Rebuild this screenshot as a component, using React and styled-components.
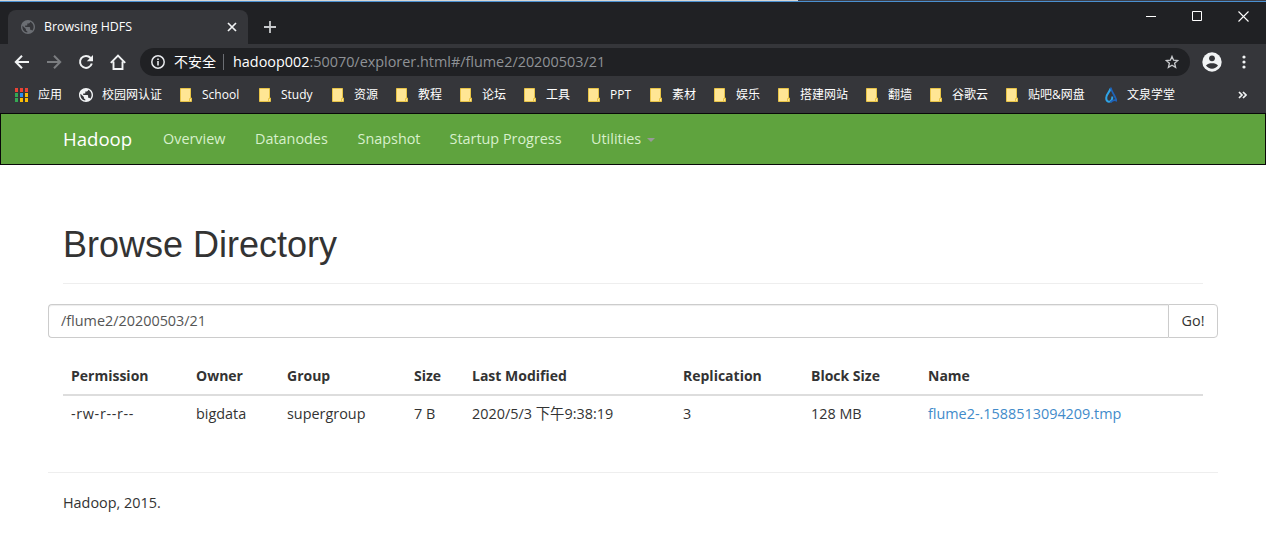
import styled, { createGlobalStyle } from "styled-components";

const ui = `"Open Sans", "Noto Sans CJK SC", sans-serif`;

const folders = [
  { label: "School", w: 79 },
  { label: "Study", w: 73 },
  { label: "资源", w: 64 },
  { label: "教程", w: 64 },
  { label: "论坛", w: 64 },
  { label: "工具", w: 64 },
  { label: "PPT", w: 62 },
  { label: "素材", w: 64 },
  { label: "娱乐", w: 64 },
  { label: "搭建网站", w: 88 },
  { label: "翻墙", w: 64 },
  { label: "谷歌云", w: 76 },
  { label: "贴吧&网盘", w: 99 },
];

const columns = [
  { label: "Permission", value: "-rw-r--r--", w: 125, spacing: 0.65 },
  { label: "Owner", value: "bigdata", w: 91 },
  { label: "Group", value: "supergroup", w: 127 },
  { label: "Size", value: "7 B", w: 58 },
  { label: "Last Modified", value: "2020/5/3 下午9:38:19", w: 211 },
  { label: "Replication", value: "3", w: 128 },
  { label: "Block Size", value: "128 MB", w: 117 },
  { label: "Name", value: "flume2-.1588513094209.tmp", w: 283, link: true },
];

const links = [
  { label: "Overview", w: 92 },
  { label: "Datanodes", w: 102.5 },
  { label: "Snapshot", w: 92 },
  { label: "Startup Progress", w: 141.5 },
];

function Globe({ color }) {
  return (
    <svg width="14" height="14" viewBox="2 2 20 20">
      <path
        d="M12 2C6.48 2 2 6.48 2 12s4.48 10 10 10 10-4.48 10-10S17.52 2 12 2zm-1 17.93c-3.950-.49-7-3.850-7-7.930 0-.62.08-1.210.21-1.790L9 15v1c0 1.100.9 2 2 2v1.930zm6.900-2.540c-.26-.81-1-1.390-1.900-1.390h-1v-3c0-.55-.45-1-1-1H8v-2h2c.55 0 1-.45 1-1V7h2c1.100 0 2-.9 2-2v-.41c2.930 1.190 5 4.060 5 7.410 0 2.080-.8 3.970-2.100 5.390z"
        fill={color}
      />
    </svg>
  );
}

function FolderIcon() {
  return (
    <svg width="12" height="14" viewBox="0 0 12 14">
      <path d="M.5.5h10v9.5h1v3.5H.5z" fill="#ffe694" stroke="#e8c447" />
      <path d="M9.5 13.5v-3h2" fill="none" stroke="#e8c447" />
    </svg>
  );
}

function AppsIcon() {
  const colors = ["#ea4335", "#ea4335", "#ea4335", "#34a853", "#2a8cf4", "#fbbc05", "#34a853", "#fbbc05", "#fbbc05"];
  return (
    <svg width="13" height="14" viewBox="0 0 13 14">
      {colors.map((c, i) => (
        <rect key={i} x={(i % 3) * 5} y={Math.floor(i / 3) * 5} width="3" height="4" fill={c} />
      ))}
    </svg>
  );
}

export default function App() {
  return (
    <>
      <GlobalStyle />
      <Browser>
        <TopEdge />
        <TabStrip>
          <Tab>
            <Globe color="#6b6e73" />
            <TabTitle>Browsing HDFS</TabTitle>
            <svg width="10" height="10" viewBox="0 0 10 10">
              <path d="M1 1l8 8M9 1l-8 8" stroke="#f1f3f4" strokeWidth="1.7" />
            </svg>
          </Tab>
          <NewTab width="12" height="12" viewBox="0 0 12 12">
            <path d="M6 0v12M0 6h12" stroke="#c8cacd" strokeWidth="1.8" />
          </NewTab>
          <WindowButtons>
            <svg width="10" height="10" viewBox="0 0 10 10">
              <path d="M0 5.5h10" stroke="#fff" />
            </svg>
            <svg width="10" height="10" viewBox="0 0 10 10">
              <path d="M.5.5h9v9h-9z" fill="none" stroke="#fff" />
            </svg>
            <svg width="11" height="11" viewBox="0 0 11 11">
              <path d="M.5.5l10 10M10.5.5l-10 10" stroke="#fff" strokeWidth="1.1" />
            </svg>
          </WindowButtons>
        </TabStrip>
        <Toolbar>
          <NavButtons>
            <svg width="16" height="14" viewBox="0 0 16 14">
              <path d="M15 7H2M8 .8 1.8 7 8 13.2" fill="none" stroke="#f1f3f4" strokeWidth="2" />
            </svg>
            <svg width="16" height="14" viewBox="0 0 16 14">
              <path d="M1 7h13M8 .8 14.2 7 8 13.2" fill="none" stroke="#7b7d80" strokeWidth="2" />
            </svg>
            <svg width="16" height="16" viewBox="0 0 16 16">
              <path d="M13.8 9.500A6 6 0 1 1 12.600 4" fill="none" stroke="#f1f3f4" strokeWidth="2" />
              <path d="M15 1v6.2H8.8z" fill="#f1f3f4" />
            </svg>
            <svg width="16" height="16" viewBox="0 0 16 16">
              <path d="M.8 8.800 8 1.600l7.200 7.200M3.500 7.500V15h9V7.500" fill="none" stroke="#f1f3f4" strokeWidth="1.900" />
            </svg>
          </NavButtons>
          <AddressBar>
            <svg width="14" height="14" viewBox="0 0 14 14">
              <circle cx="7" cy="7" r="6.2" fill="none" stroke="#e8eaed" strokeWidth="1.5" />
              <path d="M7 6v4.4M7 3.4V5" stroke="#e8eaed" strokeWidth="1.6" />
            </svg>
            <Insecure>不安全</Insecure>
            <Url>
              <b>hadoop002</b>:50070/explorer.html#/flume2/20200503/21
            </Url>
            <svg width="14" height="14" viewBox="0 0 14 14">
              <path
                d="M7 1.4 8.6 5.2 12.8 5.5 9.6 8.2 10.6 12.4 7 10.2 3.4 12.4 4.4 8.2 1.2 5.5 5.4 5.2z"
                fill="none"
                stroke="#c8cacd"
                strokeWidth="1.3"
              />
            </svg>
          </AddressBar>
          <Profile width="20" height="20" viewBox="0 0 20 20">
            <circle cx="10" cy="10" r="9.7" fill="#f1f3f4" />
            <circle cx="10" cy="6.3" r="2.9" fill="#35363a" />
            <path d="M4 13.6c1.2-1.700 3.700-2.300 6-2.300s4.800.6 6 2.300c-1.300 2-3.500 3.200-6 3.200s-4.700-1.200-6-3.200z" fill="#35363a" />
          </Profile>
          <svg width="4" height="14" viewBox="0 0 4 14">
            <circle cx="2" cy="2" r="1.6" fill="#f1f3f4" />
            <circle cx="2" cy="7" r="1.6" fill="#f1f3f4" />
            <circle cx="2" cy="12" r="1.6" fill="#f1f3f4" />
          </svg>
        </Toolbar>
        <Bookmarks>
          <Bookmark $w={64} $gap={10}>
            <AppsIcon />
            应用
          </Bookmark>
          <Bookmark $w={101} $gap={9}>
            <Globe color="#f1f3f4" />
            校园网认证
          </Bookmark>
          {folders.map((f) => (
            <Bookmark key={f.label} $w={f.w} $gap={10}>
              <FolderIcon />
              {f.label}
            </Bookmark>
          ))}
          <Bookmark $w={90} $gap={10}>
            <svg width="12" height="16" viewBox="0 0 12 16">
              <path d="M5.5 1.500C5 5 1.200 7 1.200 11c0 1.800 1 3.500 2.600 3.700 2.200.2 3.700-2 3.500-5.200" fill="none" stroke="#2fa3e6" strokeWidth="2" />
              <path d="M5.800.5C6.300 5 9.500 7 11.500 13.600 9 12.500 7.800 13 5.500 15.300" fill="none" stroke="#1e62b8" strokeWidth="1.8" />
            </svg>
            文泉学堂
          </Bookmark>
          <More width="9" height="8" viewBox="0 0 9 8">
            <path d="M1 1l3 3-3 3M5 1l3 3-3 3" fill="none" stroke="#f1f3f4" strokeWidth="1.7" />
          </More>
        </Bookmarks>
      </Browser>
      <Navbar>
        <Brand>Hadoop</Brand>
        {links.map((l) => (
          <NavLink key={l.label} $w={l.w}>
            {l.label}
          </NavLink>
        ))}
        <NavLink>
          Utilities <Caret />
        </NavLink>
      </Navbar>
      <Container>
        <Title>Browse Directory</Title>
        <PathForm>
          <PathInput defaultValue="/flume2/20200503/21" />
          <GoButton>Go!</GoButton>
        </PathForm>
        <Table>
          <thead>
            <tr>
              {columns.map((c) => (
                <Th key={c.label} $w={c.w}>
                  {c.label}
                </Th>
              ))}
            </tr>
          </thead>
          <tbody>
            <tr>
              {columns.map((c) => (
                <Td key={c.label} $spacing={c.spacing}>
                  {c.link ? <FileLink>{c.value}</FileLink> : c.value}
                </Td>
              ))}
            </tr>
          </tbody>
        </Table>
        <Footer>Hadoop, 2015.</Footer>
      </Container>
    </>
  );
}

const GlobalStyle = createGlobalStyle`
  * {
    box-sizing: border-box;
  }
  body {
    margin: 0;
    background: #fff;
    color: #333;
    font-family: ${ui};
    font-size: 14.4px;
    line-height: 20px;
    overflow: hidden;
  }
  svg {
    display: block;
    flex: none;
  }
`;
const Browser = styled.div`
  height: 113px;
  background: #35363a;
  color: #fff;
`;
const TopEdge = styled.div`
  height: 1px;
  background: linear-gradient(to right, #d5d5d5 798px, #3c3f4a 798px);
`;
const TabStrip = styled.div`
  display: flex;
  height: 43px;
  padding-left: 8px;
  background: #202124;
  border-top: 1px solid #4a90d0;
`;
const Tab = styled.div`
  display: flex;
  align-items: center;
  width: 240px;
  height: 34px;
  margin-top: 8px;
  padding: 0 11px 0 13px;
  border-radius: 8px 8px 0 0;
  background: #35363a;
`;
const TabTitle = styled.div`
  flex: 1;
  margin-left: 9px;
  font-size: 12.4px;
  white-space: nowrap;
`;
const NewTab = styled.svg`
  margin: 19px 0 0 16px;
`;
const WindowButtons = styled.div`
  display: flex;
  align-items: center;
  gap: 36px;
  height: 28px;
  margin: 0 17px 0 auto;
`;
const Toolbar = styled.div`
  display: flex;
  align-items: center;
  height: 36px;
  padding: 0 20px 0 14px;
`;
const NavButtons = styled.div`
  display: flex;
  align-items: center;
  gap: 16px;
  width: 126px;
`;
const AddressBar = styled.div`
  display: flex;
  align-items: center;
  flex: 1;
  height: 28px;
  padding: 0 11px;
  border-radius: 14px;
  background: #202124;
`;
const Insecure = styled.div`
  width: 50px;
  margin-left: 9px;
  border-right: 1px solid #6b6e73;
  font-size: 14px;
  line-height: 16px;
`;
const Url = styled.div`
  flex: 1;
  margin-left: 9px;
  color: #8f9296;
  white-space: nowrap;
  b {
    color: #fff;
    font-weight: 400;
  }
`;
const Profile = styled.svg`
  margin: 0 20px 0 12px;
`;
const Bookmarks = styled.div`
  display: flex;
  align-items: center;
  height: 29px;
  padding: 0 19px 0 15px;
`;
const Bookmark = styled.div`
  display: flex;
  align-items: center;
  flex: none;
  gap: ${({ $gap }) => $gap}px;
  width: ${({ $w }) => $w}px;
  font-size: 12px;
  line-height: 16px;
  white-space: nowrap;
`;
const More = styled.svg`
  margin-left: auto;
`;
const Navbar = styled.div`
  display: flex;
  align-items: center;
  height: 52px;
  padding-left: 62px;
  border: 1px solid #080808;
  background: #5fa33e;
`;
const Brand = styled.div`
  width: 100px;
  color: #fff;
  font-size: 18.6px;
`;
const NavLink = styled.div`
  display: flex;
  align-items: center;
  width: ${({ $w }) => ($w ? $w + "px" : "auto")};
  color: #d8f0cc;
  white-space: nowrap;
`;
const Caret = styled.span`
  margin: 2px 0 0 6px;
  border: 4px solid transparent;
  border-top-color: #999;
  border-bottom: 0;
`;
const Container = styled.div`
  width: 1170px;
  margin: 0 auto;
`;
const Title = styled.h1`
  height: 59px;
  margin: 60px 15px 20px;
  border-bottom: 1px solid #eee;
  font: 400 36px/40px "Liberation Sans", sans-serif;
`;
const PathForm = styled.div`
  display: flex;
  height: 34px;
`;
const PathInput = styled.input`
  flex: 1;
  padding: 6px 12px;
  border: 1px solid #ccc;
  border-right: 0;
  border-radius: 4px 0 0 4px;
  outline: 0;
  box-shadow: inset 0 1px 1px rgba(0, 0, 0, 0.075);
  color: #555;
  font: inherit;
`;
const GoButton = styled.button`
  width: 50px;
  padding: 0;
  border: 1px solid #ccc;
  border-radius: 0 4px 4px 0;
  background: #fff;
  color: #333;
  font: inherit;
`;
const Table = styled.table`
  table-layout: fixed;
  width: 1140px;
  margin: 19px 15px 0;
  border-collapse: collapse;
`;
const Th = styled.th`
  width: ${({ $w }) => $w}px;
  height: 38px;
  padding: 8px;
  border-bottom: 2px solid #ddd;
  text-align: left;
  font-size: 14px;
  font-weight: 700;
  white-space: nowrap;
`;
const Td = styled.td`
  height: 37px;
  padding: 8px;
  letter-spacing: ${({ $spacing }) => $spacing || 0}px;
  white-space: nowrap;
`;
const FileLink = styled.a`
  color: #428bca;
`;
const Footer = styled.div`
  margin-top: 40px;
  padding: 20px 15px;
  border-top: 1px solid #eee;
`;
